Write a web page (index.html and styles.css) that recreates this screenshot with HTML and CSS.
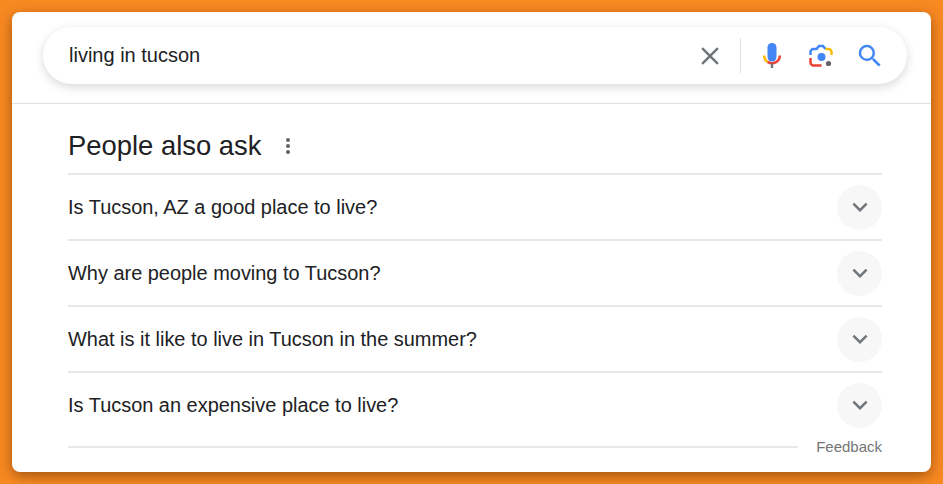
FILE: index.html
```html
<!DOCTYPE html>
<html lang="en">
<head>
    <meta charset="UTF-8">
    <meta name="viewport" content="width=device-width, initial-scale=1.0">
    <title>living in tucson</title>
    <link rel="stylesheet" href="styles.css">
</head>
<body>
<div class="card">
    <div class="header">
        <div class="search-box">
            <span class="query">living in tucson</span>
            <div class="search-icons">
                <svg class="icon-clear" width="30" height="30" viewBox="0 0 24 24"><path fill="#70757a" d="M19 6.41 17.59 5 12 10.59 6.41 5 5 6.41 10.59 12 5 17.59 6.41 19 12 13.41 17.59 19 19 17.59 13.41 12z"/></svg>
                <span class="search-sep"></span>
                <svg class="icon-mic" width="18" height="25" viewBox="0 0 18 25">
                    <rect x="4.5" y="0" width="9" height="18.5" rx="4.5" fill="#4285f4"/>
                    <path d="M1.2 12.5a7.8 7.8 0 0 0 3.4 6.4" fill="none" stroke="#fbbc04" stroke-width="2.5"/>
                    <path d="M4.6 18.9a7.8 7.8 0 0 0 12.2-6.4" fill="none" stroke="#ea4335" stroke-width="2.5"/>
                    <rect x="7.8" y="20.5" width="2.4" height="4.5" fill="#70757a"/>
                </svg>
                <svg class="icon-lens" width="24" height="24" viewBox="0 0 24 24">
                    <path d="M1.5 11V8a3 3 0 0 1 3-3h3l2.5-3h4l2.5 3" fill="none" stroke="#4285f4" stroke-width="2.5"/>
                    <path d="M16.5 5h3a3 3 0 0 1 3 3v3" fill="none" stroke="#fbbc04" stroke-width="2.5"/>
                    <path d="M1.5 14v4.5a3 3 0 0 0 3 3h8" fill="none" stroke="#ea4335" stroke-width="2.5"/>
                    <circle cx="12.5" cy="13" r="4" fill="#4285f4"/>
                    <circle cx="19.5" cy="19.5" r="2.6" fill="#5f6368"/>
                </svg>
                <svg class="icon-search" width="30" height="30" viewBox="0 0 24 24"><path fill="#4285f4" d="M15.5 14h-.79l-.28-.27A6.47 6.47 0 0 0 16 9.5 6.5 6.5 0 1 0 9.5 16c1.61 0 3.09-.59 4.23-1.57l.27.28v.79l5 4.99L20.49 19l-4.99-5zm-6 0C7.01 14 5 11.99 5 9.5S7.01 5 9.5 5 14 7.01 14 9.5 11.99 14 9.5 14z"/></svg>
            </div>
        </div>
    </div>

    <div class="paa">
        <div class="paa-title">
            <h2>People also ask</h2>
            <svg width="24" height="24" viewBox="0 0 24 24"><path fill="#5f6368" d="M12 8a2 2 0 1 0 0-4 2 2 0 0 0 0 4zm0 2a2 2 0 1 0 0 4 2 2 0 0 0 0-4zm0 6a2 2 0 1 0 0 4 2 2 0 0 0 0-4z"/></svg>
        </div>
        <div class="question">
            <span>Is Tucson, AZ a good place to live?</span>
            <span class="toggle"><svg width="30" height="30" viewBox="0 0 24 24"><path fill="#70757a" d="M16.59 8.59 12 13.17 7.41 8.59 6 10l6 6 6-6z"/></svg></span>
        </div>
        <div class="question">
            <span>Why are people moving to Tucson?</span>
            <span class="toggle"><svg width="30" height="30" viewBox="0 0 24 24"><path fill="#70757a" d="M16.59 8.59 12 13.17 7.41 8.59 6 10l6 6 6-6z"/></svg></span>
        </div>
        <div class="question">
            <span>What is it like to live in Tucson in the summer?</span>
            <span class="toggle"><svg width="30" height="30" viewBox="0 0 24 24"><path fill="#70757a" d="M16.59 8.59 12 13.17 7.41 8.59 6 10l6 6 6-6z"/></svg></span>
        </div>
        <div class="question">
            <span>Is Tucson an expensive place to live?</span>
            <span class="toggle"><svg width="30" height="30" viewBox="0 0 24 24"><path fill="#70757a" d="M16.59 8.59 12 13.17 7.41 8.59 6 10l6 6 6-6z"/></svg></span>
        </div>
        <div class="paa-footer">
            <span class="footer-line"></span>
            <span class="feedback">Feedback</span>
        </div>
    </div>
</div>
</body>
</html>
```

FILE: styles.css
```css
html, body {
    height: 100%;
}

body {
    margin: 0;
    padding: 12px;
    box-sizing: border-box;
    overflow: hidden;
    font-family: "Liberation Sans", Arial, sans-serif;
    background-color: #f98a22;
    color: #202124;
}

.card {
    height: 460px;
    background: white;
    border-radius: 8px;
    box-shadow: 0 4px 14px rgba(90, 40, 0, 0.55);
}

.header {
    height: 92px;
    padding: 15px 24px 0 31px;
    box-sizing: border-box;
    border-bottom: 1px solid #dfe1e5;
}

.search-box {
    height: 57px;
    display: flex;
    align-items: center;
    justify-content: space-between;
    padding: 0 22px 0 26px;
    border-radius: 29px;
    box-shadow: 0 3px 10px rgba(60, 64, 67, 0.2);
}

.query {
    font-size: 20px;
}

.search-icons {
    display: flex;
    align-items: center;
}

.icon-clear {
    margin-right: 15px;
}

.search-sep {
    width: 1px;
    height: 35px;
    background-color: #dfe1e5;
    margin-right: 22px;
}

.icon-mic {
    margin-right: 28px;
}

.icon-lens {
    margin-right: 22px;
}

.paa {
    padding: 0 49px 0 56px;
}

.paa-title {
    height: 69px;
    box-sizing: border-box;
    padding-top: 15px;
    display: flex;
    align-items: center;
    gap: 15px;
}

.paa-title h2 {
    margin: 0;
    font-size: 27.4px;
    font-weight: normal;
}

.question {
    height: 66px;
    box-sizing: border-box;
    display: flex;
    align-items: center;
    justify-content: space-between;
    border-top: 2px solid #e8e8e8;
    font-size: 19.95px;
}

.toggle {
    width: 45px;
    height: 45px;
    border-radius: 50%;
    background-color: #f7f7f7;
    display: flex;
    align-items: center;
    justify-content: center;
}

.paa-footer {
    display: flex;
    align-items: center;
    height: 18px;
}

.footer-line {
    flex: 1;
    height: 2px;
    background-color: #e8e8e8;
    margin: 2px 18px 0 0;
}

.feedback {
    font-size: 15px;
    color: #757575;
}
```
